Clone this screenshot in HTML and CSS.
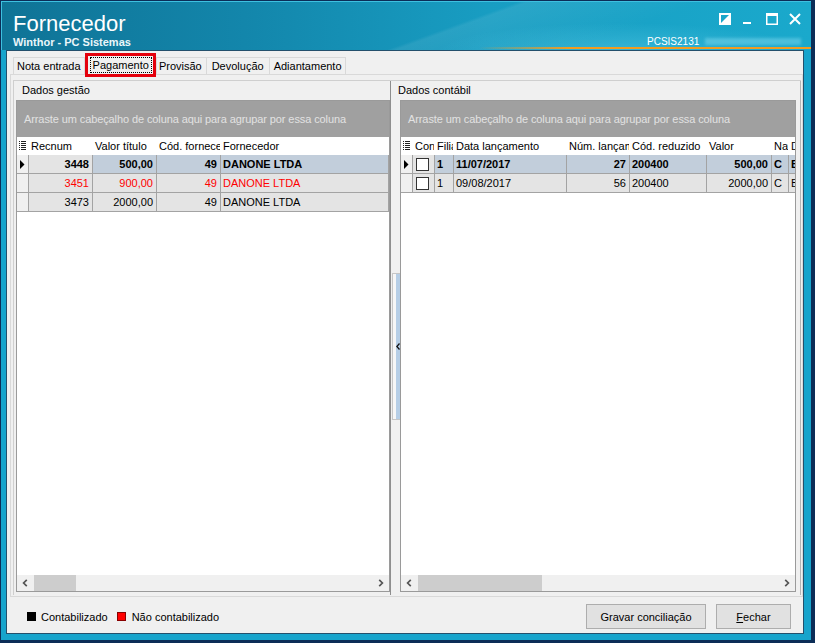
FILE: index.html
```html
<!DOCTYPE html>
<html>
<head>
<meta charset="utf-8">
<title>Fornecedor</title>
<link rel="stylesheet" href="styles.css">
</head>
<body>
<div class="window">
  <div class="titlebar">
    <div class="tb-left">
      <div class="tb-title">Fornecedor</div>
      <div class="tb-sub">Winthor - PC Sistemas</div>
    </div>
    <div class="tb-right">
      <div class="controls">
        <svg class="ic ic-restore" width="12" height="12" viewBox="0 0 12 12"><rect x="1" y="1" width="10" height="10" fill="none" stroke="#fff" stroke-width="2"/><polygon points="11,1 11,11 1,11" fill="#fff"/></svg>
        <svg class="ic ic-min" width="8" height="12" viewBox="0 0 8 12"><rect x="0" y="9" width="8" height="2" fill="#fff"/></svg>
        <svg class="ic ic-max" width="12" height="12" viewBox="0 0 12 12"><rect x="0.75" y="0.75" width="10.5" height="10.5" fill="none" stroke="#fff" stroke-width="1.5"/><rect x="0" y="0" width="12" height="3" fill="#fff"/></svg>
        <svg class="ic ic-close" width="12" height="12" viewBox="0 0 12 12"><path d="M1 1 L11 11 M11 1 L1 11" stroke="#fff" stroke-width="2" fill="none"/></svg>
      </div>
      <div class="code-row"><span class="code">PCSIS2131</span><span class="blur"></span></div>
    </div>
  </div>
  <div class="frame">
    <div class="client">
      <div class="tabs">
        <div class="tab">Nota entrada</div>
        <div class="tab active"><span class="focus">Pagamento</span></div>
        <div class="tab tab-prov">Provisão</div>
        <div class="tab tab-dev">Devolução</div>
        <div class="tab tab-adi">Adiantamento</div>
      </div>
      <div class="tabpage">
        <div class="split">
          <div class="panel panel-left">
            <div class="panel-title">Dados gestão</div>
            <div class="grid">
              <div class="groupby">Arraste um cabeçalho de coluna aqui para agrupar por essa coluna</div>
              <div class="rows">
                <div class="row head">
                  <div class="c ind"><svg width="7" height="9" viewBox="0 0 7 9"><g fill="#222"><rect x="0" y="0" width="1" height="1"/><rect x="2" y="0" width="5" height="1"/><rect x="0" y="2" width="1" height="1"/><rect x="2" y="2" width="5" height="1"/><rect x="0" y="4" width="1" height="1"/><rect x="2" y="4" width="5" height="1"/><rect x="0" y="6" width="1" height="1"/><rect x="2" y="6" width="5" height="1"/><rect x="0" y="8" width="1" height="1"/><rect x="2" y="8" width="5" height="1"/></g></svg></div>
                  <div class="c l-rec">Recnum</div>
                  <div class="c l-val">Valor título</div>
                  <div class="c l-cod">Cód. fornecedor</div>
                  <div class="c l-forn">Fornecedor</div>
                </div>
                <div class="row sel">
                  <div class="c ind"><svg width="5" height="9" viewBox="0 0 5 9"><polygon points="0,0 4.5,4.5 0,9" fill="#000"/></svg></div>
                  <div class="c l-rec r first">3448</div>
                  <div class="c l-val r">500,00</div>
                  <div class="c l-cod r">49</div>
                  <div class="c l-forn">DANONE LTDA</div>
                </div>
                <div class="row red">
                  <div class="c ind"></div>
                  <div class="c l-rec r">3451</div>
                  <div class="c l-val r">900,00</div>
                  <div class="c l-cod r">49</div>
                  <div class="c l-forn">DANONE LTDA</div>
                </div>
                <div class="row">
                  <div class="c ind"></div>
                  <div class="c l-rec r">3473</div>
                  <div class="c l-val r">2000,00</div>
                  <div class="c l-cod r">49</div>
                  <div class="c l-forn">DANONE LTDA</div>
                </div>
              </div>
              <div class="hscroll">
                <div class="arr"><svg width="6" height="8" viewBox="0 0 6 8"><polyline points="4.8,0.8 1.6,4 4.8,7.2" fill="none" stroke="#555" stroke-width="1.7"/></svg></div>
                <div class="thumb thumb-left"></div>
                <div class="arr arr-right"><svg width="6" height="8" viewBox="0 0 6 8"><polyline points="1.2,0.8 4.4,4 1.2,7.2" fill="none" stroke="#555" stroke-width="1.7"/></svg></div>
              </div>
            </div>
          </div>
          <div class="splitter">
            <div class="handle"><svg width="4" height="7" viewBox="0 0 4 7"><polyline points="3.5,0.5 0.8,3.5 3.5,6.5" fill="none" stroke="#111" stroke-width="1.3"/></svg></div>
          </div>
          <div class="panel panel-right">
            <div class="panel-title">Dados contábil</div>
            <div class="grid">
              <div class="groupby">Arraste um cabeçalho de coluna aqui para agrupar por essa coluna</div>
              <div class="rows">
                <div class="row head">
                  <div class="c ind"><svg width="7" height="9" viewBox="0 0 7 9"><g fill="#222"><rect x="0" y="0" width="1" height="1"/><rect x="2" y="0" width="5" height="1"/><rect x="0" y="2" width="1" height="1"/><rect x="2" y="2" width="5" height="1"/><rect x="0" y="4" width="1" height="1"/><rect x="2" y="4" width="5" height="1"/><rect x="0" y="6" width="1" height="1"/><rect x="2" y="6" width="5" height="1"/><rect x="0" y="8" width="1" height="1"/><rect x="2" y="8" width="5" height="1"/></g></svg></div>
                  <div class="c r-con">Conciliado</div>
                  <div class="c r-fil">Filial</div>
                  <div class="c r-data">Data lançamento</div>
                  <div class="c r-num">Núm. lançamento</div>
                  <div class="c r-cod">Cód. reduzido</div>
                  <div class="c r-val">Valor</div>
                  <div class="c r-nat">Natureza</div>
                  <div class="c r-d">Descrição</div>
                </div>
                <div class="row sel">
                  <div class="c ind"><svg width="5" height="9" viewBox="0 0 5 9"><polygon points="0,0 4.5,4.5 0,9" fill="#000"/></svg></div>
                  <div class="c r-con first"><span class="chk"></span></div>
                  <div class="c r-fil">1</div>
                  <div class="c r-data">11/07/2017</div>
                  <div class="c r-num r">27</div>
                  <div class="c r-cod">200400</div>
                  <div class="c r-val r">500,00</div>
                  <div class="c r-nat">C</div>
                  <div class="c r-d">BANCO</div>
                </div>
                <div class="row">
                  <div class="c ind"></div>
                  <div class="c r-con"><span class="chk"></span></div>
                  <div class="c r-fil">1</div>
                  <div class="c r-data">09/08/2017</div>
                  <div class="c r-num r">56</div>
                  <div class="c r-cod">200400</div>
                  <div class="c r-val r">2000,00</div>
                  <div class="c r-nat">C</div>
                  <div class="c r-d">BANCO</div>
                </div>
              </div>
              <div class="hscroll">
                <div class="arr"><svg width="6" height="8" viewBox="0 0 6 8"><polyline points="4.8,0.8 1.6,4 4.8,7.2" fill="none" stroke="#555" stroke-width="1.7"/></svg></div>
                <div class="thumb thumb-right"></div>
                <div class="arr arr-right"><svg width="6" height="8" viewBox="0 0 6 8"><polyline points="1.2,0.8 4.4,4 1.2,7.2" fill="none" stroke="#555" stroke-width="1.7"/></svg></div>
              </div>
            </div>
          </div>
        </div>
      </div>
      <div class="footer">
        <span class="sq sq-black"></span><span class="legend">Contabilizado</span>
        <span class="sq sq-red"></span><span class="legend">Não contabilizado</span>
        <div class="buttons">
          <div class="btn btn-save">Gravar conciliação</div>
          <div class="btn btn-close"><u>F</u>echar</div>
        </div>
      </div>
    </div>
  </div>
</div>
</body>
</html>
```

FILE: styles.css
```css
* { box-sizing: border-box; }
html, body { margin: 0; padding: 0; }
body {
  width: 815px;
  height: 643px;
  overflow: hidden;
  font-family: "Liberation Sans", Arial, sans-serif;
  font-size: 11px;
  color: #000;
  background: #0b2a52;
}

.window {
  width: 815px;
  height: 643px;
  display: flex;
  flex-direction: column;
  border-style: solid;
  border-color: #0c2d57;
  border-width: 1px 4px 3px 1px;
  background: #17a4cc;
  overflow: hidden;
}

/* ---------- title bar ---------- */
.titlebar {
  height: 49px;
  flex: none;
  display: flex;
  background:
    radial-gradient(ellipse 260px 40px at 620px 50px, rgba(110, 215, 240, 0.35), rgba(110, 215, 240, 0) 70%),
    linear-gradient(160deg, rgba(255, 255, 255, 0) 55%, rgba(255, 255, 255, 0.08) 56%, rgba(255, 255, 255, 0) 75%),
    linear-gradient(90deg, #0f7396 0%, #1386ab 30%, #189dc2 60%, #1aa9cc 100%);
  box-shadow: inset 1px 1px 0 #3ec0e0;
}
.tb-left { padding: 11px 0 0 12px; }
.tb-title { font-size: 22px; line-height: 24px; color: #fff; }
.tb-sub { font-size: 11px; line-height: 13px; font-weight: bold; color: #eaf6fa; margin-top: 0; }

.tb-right {
  margin-left: auto;
  width: 331px;
  height: 48px;
  display: flex;
  flex-direction: column;
  border-bottom: 2px solid #f39c1f;
  border-image: linear-gradient(to right, rgba(243, 156, 31, 0), #f39c1f 90px) 1;
}
.controls {
  margin-top: 12px;
  display: flex;
  justify-content: flex-end;
  padding-right: 10px;
}
.ic { display: block; flex: none; }
.ic-min { margin-left: 12px; }
.ic-max { margin-left: 15px; }
.ic-close { margin-left: 11px; }

.code-row {
  margin-top: auto;
  height: 11px;
  display: flex;
  align-items: center;
  padding-left: 167px;
}
.code { font-size: 10px; line-height: 11px; color: #fff; }
.blur {
  width: 96px;
  height: 7px;
  margin-left: 6px;
  background: rgba(150, 225, 244, 0.4);
  filter: blur(1.5px);
}

/* ---------- frame / client ---------- */
.frame {
  flex: 1;
  display: flex;
  padding: 0 7px 6px 5px;
  min-height: 0;
  min-width: 0;
}
.client {
  flex: 1;
  display: flex;
  flex-direction: column;
  border: 1px solid #24506c;
  background: #f0f0f0;
  min-height: 0;
  min-width: 0;
}

/* ---------- tabs ---------- */
.tabs {
  height: 23px;
  flex: none;
  display: flex;
  align-items: flex-end;
  padding-left: 6px;
  position: relative;
  z-index: 1;
}
.tab {
  height: 17px;
  padding: 0 3px 0 3px;
  border: 1px solid #d9d9d9;
  border-bottom: none;
  line-height: 16px;
  background: #f0f0f0;
  margin-right: -1px;
  white-space: nowrap;
}
.tab.active {
  height: 21px;
  margin: 0 1px -1px 2px;
  padding: 2px 2px 0 3px;
  position: relative;
  background: #f0f0f0;
  border-color: #d9d9d9;
}
.tab.active::after {
  content: "";
  position: absolute;
  left: -2px;
  top: -2px;
  right: -2px;
  bottom: -2px;
  border: 3px solid #e4000c;
}
.tab-prov { padding: 0 4px 0 2px; }
.tab-dev { padding: 0 5px 0 5px; }
.tab-adi { padding: 0 3px 0 4px; }
.focus {
  display: inline-block;
  border: 1px dotted #000;
  padding: 0 2px;
  line-height: 14px;
}

.tabpage {
  flex: 1;
  min-height: 0;
  min-width: 0;
  margin-left: 3px;
  border: 1px solid #d9d9d9;
  padding: 5px 1px 1px 2px;
  display: flex;
}
.split {
  flex: 1;
  display: flex;
  border-top: 1px solid #cfcfcf;
  border-left: 1px solid #cfcfcf;
  min-height: 0;
  min-width: 0;
}

/* ---------- panels ---------- */
.panel {
  display: flex;
  flex-direction: column;
  padding-bottom: 3px;
  min-height: 0;
  min-width: 0;
}
.panel-left { width: 376px; flex: none; }
.panel-right { flex: 1; padding-right: 4px; border-right: 1px solid #b4b4b4; }
.panel-title { height: 19px; line-height: 19px; white-space: nowrap; }
.panel-left .panel-title { padding-left: 8px; }
.panel-right .panel-title { margin-left: -2px; }

.splitter {
  width: 10px;
  flex: none;
  border-left: 1px solid #8e8e8e;
  padding: 19px 0 3px 1px;
  display: flex;
  align-items: center;
}
.handle {
  width: 8px;
  height: 147px;
  border: 1px solid #c6c6c6;
  border-right: none;
  background: linear-gradient(to right, #f6f6f6 0, #f6f6f6 3px, #b6cee6 3px);
  display: flex;
  align-items: center;
  justify-content: center;
  padding-left: 2px;
}
.handle svg { display: block; }

/* ---------- grid ---------- */
.grid {
  flex: 1;
  min-height: 0;
  min-width: 0;
  display: flex;
  flex-direction: column;
  border: 1px solid #9a9a9a;
  overflow: hidden;
}
.panel-left .grid { margin-left: 2px; }

.groupby {
  height: 36px;
  flex: none;
  background: #a0a0a0;
  color: #e2e2e2;
  line-height: 36px;
  padding-left: 7px;
  white-space: nowrap;
  overflow: hidden;
  letter-spacing: -0.1px;
}
.rows {
  flex: 1;
  min-height: 0;
  min-width: 0;
  background: #fff;
  overflow: hidden;
}
.row { display: flex; height: 19px; }
.row.head { height: 18px; }

.c {
  flex: none;
  height: 100%;
  border-right: 1px solid #a3a3a3;
  border-bottom: 1px solid #a3a3a3;
  padding: 0 3px 0 2px;
  line-height: 18px;
  white-space: nowrap;
  overflow: hidden;
  background: #e4e4e4;
}
.head .c { border-color: transparent; background: #fff; line-height: 18px; }
.c.r { text-align: right; }
.c.ind {
  width: 12px;
  padding: 0;
  background: #f0f0f0;
  display: flex;
  align-items: center;
  justify-content: center;
}
.head .c.ind { background: #fff; justify-content: flex-start; padding-left: 2px; }
.c.ind svg { display: block; }

.sel .c { background: #c2cedb; font-weight: bold; }
.sel .c.first { background: #e4e4e4; font-weight: bold; }
.sel .c.ind { background: #f0f0f0; }
.row.red .c { color: #f00; }

.l-rec { width: 64px; }
.l-val { width: 64px; }
.l-cod { width: 64px; }
.c.l-forn { flex: 1; }

.r-con { width: 22px; }
.r-fil { width: 19px; }
.r-data { width: 113px; }
.r-num { width: 63px; }
.r-cod { width: 77px; }
.r-val { width: 65px; }
.r-nat { width: 17px; }
.r-d { width: 60px; }
.c.r-con { display: flex; align-items: center; padding-left: 3px; }
.head .c.r-con { display: block; padding-left: 2px; }
.chk {
  display: block;
  width: 13px;
  height: 13px;
  border: 1px solid #333;
  background: #fff;
}

.hscroll {
  height: 16px;
  flex: none;
  display: flex;
  background: #f0f0f0;
}
.arr {
  width: 16px;
  flex: none;
  display: flex;
  align-items: center;
  justify-content: center;
}
.arr svg { display: block; }
.arr-right { margin-left: auto; }
.thumb { background: #cdcdcd; margin-left: 1px; }
.thumb-left { width: 42px; }
.thumb-right { width: 124px; }

/* ---------- footer ---------- */
.footer {
  height: 36px;
  flex: none;
  display: flex;
  align-items: center;
  padding: 3px 12px 0 20px;
}
.sq { width: 9px; height: 9px; flex: none; margin-right: 5px; }
.sq-black { background: #000; }
.sq-red { background: #f00; border: 1px solid #800; margin-left: 9px; margin-right: 6px; }
.legend { white-space: nowrap; }
.buttons { margin-left: auto; display: flex; gap: 10px; }
.btn {
  height: 25px;
  border: 1px solid #adadad;
  background: #e1e1e1;
  display: flex;
  align-items: center;
  justify-content: center;
  white-space: nowrap;
}
.btn-save { width: 120px; }
.btn-close { width: 75px; }
```
